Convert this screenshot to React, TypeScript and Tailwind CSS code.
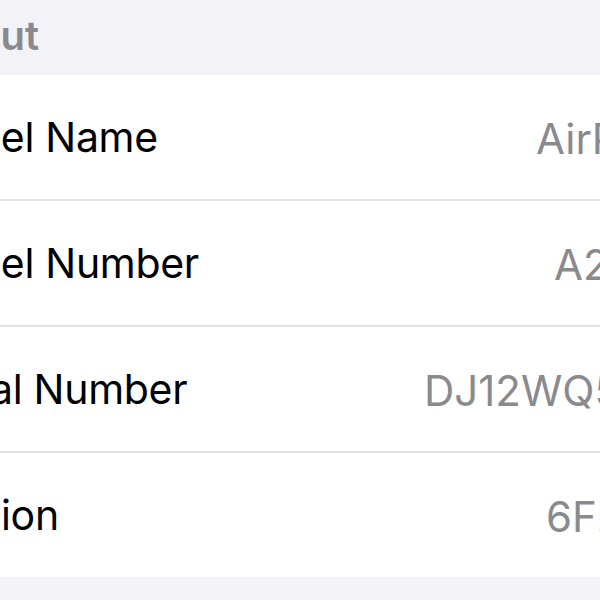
const rows = [
  { label: "Model Name", value: "AirPods Pro", valueBox: "w-[64px]" },
  { label: "Model Number", value: "A2084", valueBox: "w-[46px]" },
  { label: "Serial Number", value: "DJ12WQ5XLKKT", valueBox: "w-[176px]" },
  { label: "Version", value: "6F21", valueBox: "w-[54px]" },
];

export default function App() {
  return (
    <div
      className="w-[600px] h-[600px] overflow-hidden bg-[#f2f2f7]"
      style={{ fontFamily: "Inter, 'Liberation Sans', sans-serif" }}
    >
      <div className="h-[75px] flex items-end pb-[19px]">
        <span className="-ml-[78px] text-[40px] leading-none font-semibold text-[#8a8a8e] whitespace-nowrap">
          About
        </span>
      </div>

      <div className="bg-white">
        {rows.map((row, i) => (
          <div key={row.label}>
            {i > 0 && <div className="h-[2px] bg-[#e3e3e7]" />}
            <div className="h-[124px] flex items-center pt-[2px]">
              <span className="flex-1 -ml-[85px] text-[41px] tracking-[-0.3px] text-black whitespace-nowrap">
                {row.label}
              </span>
              <div className={`${row.valueBox} shrink-0 overflow-hidden`}>
                <span className="text-[42px] text-[#8a8a8e] whitespace-nowrap">
                  {row.value}
                </span>
              </div>
            </div>
          </div>
        ))}
      </div>
    </div>
  );
}
